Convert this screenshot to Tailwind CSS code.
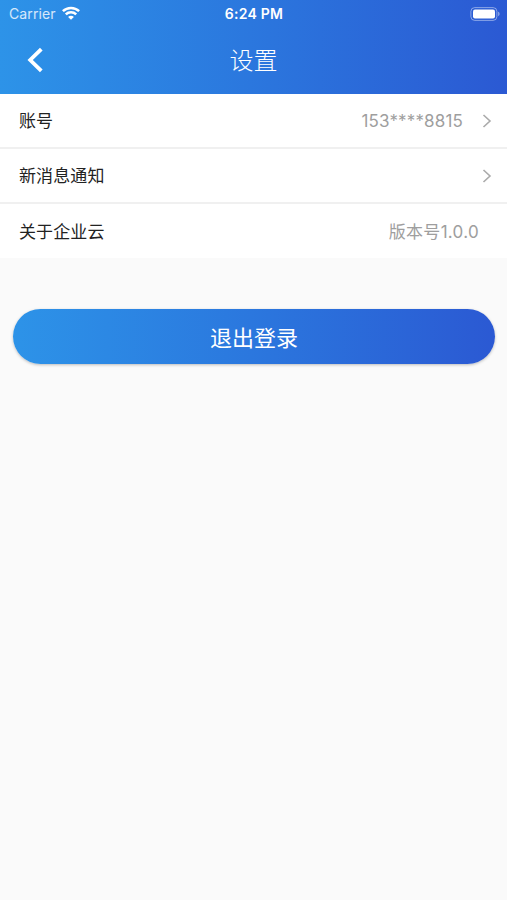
<!DOCTYPE html>
<html lang="zh-CN">
	<head>
		<meta charset="UTF-8" />
		<meta name="viewport" content="width=device-width, initial-scale=1.0" />
		<script src="https://cdn.jsdelivr.net/npm/@tailwindcss/browser@4"></script>
		<title>设置</title>
	</head>
	<body class="h-screen overflow-hidden bg-[#fafafa] font-['Inter','Noto_Sans_CJK_SC',sans-serif]">
		<header class="h-[94px] bg-linear-to-r from-[#2d93e8] to-[#2b59d3] text-white">
			<!-- Status bar -->
			<div class="grid h-[27px] grid-cols-3 items-center pl-[9px] pr-[7px] text-[14px]">
				<div class="flex items-center gap-[6px] text-white/80">
					<span class="tracking-[0.1px]">Carrier</span>
					<svg class="mb-px h-[14px] w-[18px] text-white" viewBox="0 0 18 14" fill="none" stroke="currentColor" stroke-width="2.5">
						<path d="M.9 5.2a11.6 11.6 0 0 1 16.2 0" />
						<path d="M3.8 8.4a7.4 7.4 0 0 1 10.4 0" />
						<path d="M9 13.8 6.1 10.9a4 4 0 0 1 5.800 0z" fill="currentColor" stroke="none" />
					</svg>
				</div>
				<span class="-ml-px pb-px text-center text-[14px] font-semibold tracking-[0.25px]">6:24 PM</span>
				<svg class="h-[14px] w-[30px] justify-self-end" viewBox="0 0 30 14">
					<rect x=".9" y=".6" width="26" height="12.8" rx="3.8" fill="none" stroke="white" stroke-opacity=".45" />
					<rect x="3" y="2.4" width="22" height="9" rx="2" fill="white" />
					<path d="M28.2 4.8c1.8.6 1.8 3.8 0 4.4z" fill="white" fill-opacity=".5" />
				</svg>
			</div>
			<!-- Title bar -->
			<div class="grid h-[66px] grid-cols-3 items-center">
				<svg class="ml-[27px] h-[26px] w-4" viewBox="0 0 16 26" fill="none" stroke="currentColor" stroke-width="3.8">
					<path d="M14.3 2.1 3.2 13l11.1 10.9" />
				</svg>
				<h1 class="pt-0.5 text-center text-[24px] font-light">设置</h1>
			</div>
		</header>

		<!-- Settings list -->
		<ul class="divide-y-2 divide-[#f0f0f0] bg-white text-[17px] leading-[25px] text-[#222]">
			<li class="flex h-[55px] items-center pl-[19px] pr-[15px] pt-px">
				<span class="flex-1 tracking-[0.1px]">账号</span>
				<span class="tracking-[0.15px] text-[#9e9e9e]">153****8815</span>
				<svg class="ml-[19px] h-[14px] w-[10px] text-[#aaa]" viewBox="0 0 10 14" fill="none" stroke="currentColor" stroke-width="1.6">
					<path d="M1.5 1 8 7l-6.5 6" />
				</svg>
			</li>
			<li class="flex h-[55px] items-center pl-[19px] pr-[15px] pt-px">
				<span class="flex-1 tracking-[0.1px]">新消息通知</span>
				<svg class="h-[14px] w-[10px] text-[#aaa]" viewBox="0 0 10 14" fill="none" stroke="currentColor" stroke-width="1.6">
					<path d="M1.5 1 8 7l-6.5 6" />
				</svg>
			</li>
			<li class="flex h-[54px] items-center pl-[19px] pr-[28px] pt-0.5">
				<span class="flex-1 tracking-[0.1px]">关于企业云</span>
				<span class="tracking-[0.3px] text-[#9e9e9e]">版本号1.0.0</span>
			</li>
		</ul>

		<!-- Logout -->
		<div class="pl-[13px] pr-3 pt-[51px]">
			<button class="h-[55px] w-full rounded-full bg-linear-to-r from-[#2d93e8] to-[#2b59d3] pt-[3px] text-[22px] text-white shadow-[0_1px_3px_rgba(0,0,0,0.25)]">退出登录</button>
		</div>
	</body>
</html>
